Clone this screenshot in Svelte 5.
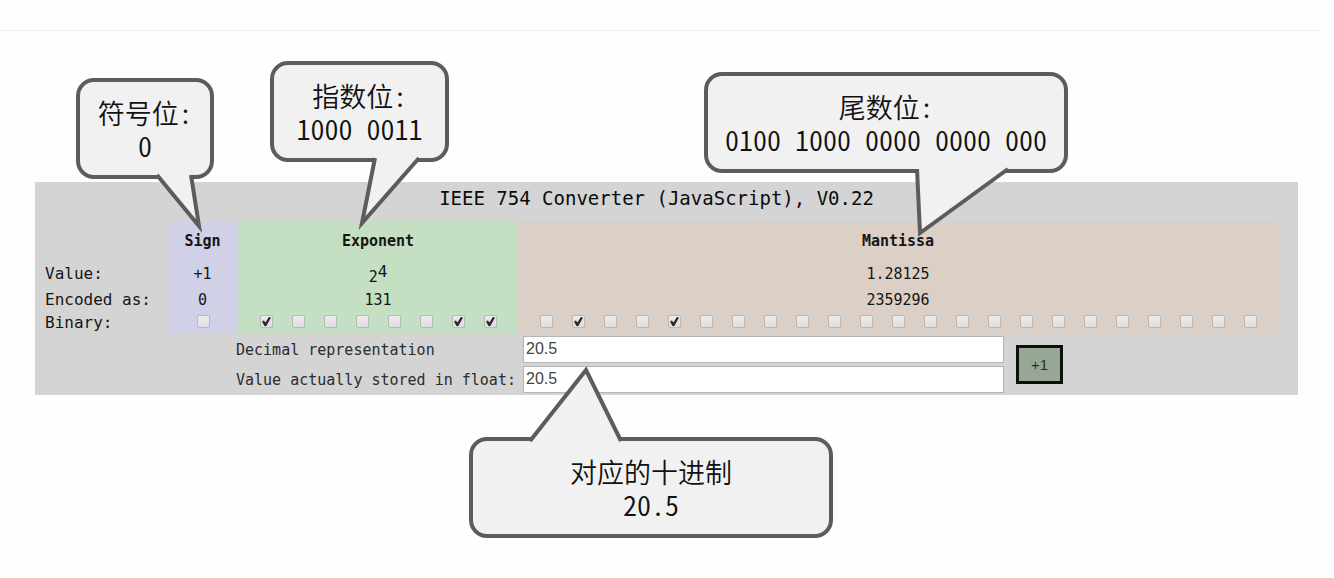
<script>
  let sign = $state([false]);
  let exponent = $state([true, false, false, false, false, false, true, true]);
  let mantissa = $state(Array.from({ length: 23 }, (_, i) => i === 1 || i === 4));
  let decimal = $state('20.5');
  let stored = $state('20.5');
</script>

{#snippet bits(list, name)}
  <div class="bits">
    {#each list as _, i}
      <input type="checkbox" aria-label={`${name} ${i + 1}`} bind:checked={list[i]} />
    {/each}
  </div>
{/snippet}

<hr />
<main>
  <section class="panel">
    <h1>IEEE 754 Converter (JavaScript), V0.22</h1>
    <table>
      <colgroup>
        <col class="c-label" /><col class="c-sign" /><col class="c-exp" /><col />
      </colgroup>
      <thead>
        <tr class="head">
          <td></td>
          <th scope="col" class="sign">Sign</th>
          <th scope="col" class="exp">Exponent</th>
          <th scope="col" class="man">Mantissa</th>
        </tr>
      </thead>
      <tbody>
        <tr class="value">
          <th scope="row">Value:</th>
          <td class="sign">+1</td>
          <td class="exp power">2<sup>4</sup></td>
          <td class="man">1.28125</td>
        </tr>
        <tr class="encoded">
          <th scope="row">Encoded as:</th>
          <td class="sign">0</td>
          <td class="exp">131</td>
          <td class="man">2359296</td>
        </tr>
        <tr class="binary">
          <th scope="row">Binary:</th>
          <td class="sign">{@render bits(sign, 'Sign')}</td>
          <td class="exp">{@render bits(exponent, 'Exponent')}</td>
          <td class="man">{@render bits(mantissa, 'Mantissa')}</td>
        </tr>
      </tbody>
    </table>
    <form onsubmit={(e) => e.preventDefault()}>
      <div class="fields">
        <label for="decimal">Decimal representation</label>
        <input id="decimal" type="text" bind:value={decimal} />
        <label for="stored">Value actually stored in float:</label>
        <input id="stored" type="text" bind:value={stored} />
      </div>
      <button type="button">+1</button>
    </form>
  </section>

  <aside class="callout on-sign">
    <svg width="60" height="60" viewBox="0 0 60 60" aria-hidden="true">
      <path d="M1 1 L43 52 L35 1" />
    </svg>
    <p class="zh">符号位:</p>
    <p class="num">0</p>
  </aside>
  <aside class="callout on-exp">
    <svg width="80" height="80" viewBox="0 0 80 80" aria-hidden="true">
      <path d="M17 2 L4 67 L61 2" />
    </svg>
    <p class="zh">指数位:</p>
    <p class="num">1000 0011</p>
  </aside>
  <aside class="callout on-man">
    <svg width="110" height="80" viewBox="0 0 110 80" aria-hidden="true">
      <path d="M3 1 L6 65 L94 1" />
    </svg>
    <p class="zh">尾数位:</p>
    <p class="num">0100 1000 0000 0000 000</p>
  </aside>
  <aside class="callout on-dec">
    <svg width="110" height="80" viewBox="0 0 110 80" aria-hidden="true">
      <path d="M5 79 L61 8 L96 79" />
    </svg>
    <p class="zh">对应的十进制</p>
    <p class="num">20.5</p>
  </aside>
</main>

<style>
  :global(body) {
    margin: 0;
    background: #fefefe;
  }

  hr {
    margin: 30px 14px 0 0;
    border: 0;
    border-top: 1px solid #eeeeee;
  }

  main {
    position: relative;
    padding: 151px 36px 183px 35px;
    color: #151515;
    font: 15px/20px 'DejaVu Sans Mono', monospace;
  }

  .panel {
    background: #d4d4d4;
  }

  h1 {
    margin: 0;
    padding: 0 20px 7px 0;
    font-size: 19px;
    font-weight: 400;
    line-height: 32px;
    text-align: center;
    color: #0c0c0c;
  }

  table {
    width: calc(100% - 20px);
    table-layout: fixed;
    border-collapse: collapse;
  }

  .c-label { width: 132px; }
  .c-sign { width: 71px; }
  .c-exp { width: 280px; }

  th,
  td {
    padding: 0;
    text-align: center;
    font-weight: 400;
  }

  th { font-size: 16px; }

  tbody th {
    padding-left: 10px;
    text-align: left;
    white-space: nowrap;
  }

  .sign { background: #d0d0e6; }
  .exp { background: #c5dfc2; }
  .man { background: #dcd0c6; }

  .head { height: 40px; }
  .head th {
    font-size: 15px;
    font-weight: 700;
  }
  .value { height: 26px; }
  .value .power { padding-top: 6px; }
  .encoded { height: 25px; }
  .binary { height: 22px; }
  .binary td { vertical-align: top; }

  sup {
    font-size: 16px;
    line-height: 0;
    vertical-align: 5px;
  }

  .bits {
    display: flex;
    justify-content: center;
    padding-top: 3px;
  }

  .bits input {
    appearance: none;
    position: relative;
    box-sizing: border-box;
    width: 13px;
    height: 13px;
    margin: 0 9px 0 10px;
    border: 1px solid #b9b9b9;
    border-radius: 2px;
    background: linear-gradient(#ececec, #dedede);
  }

  .bits input:checked::after {
    content: '';
    position: absolute;
    inset: 1px;
    background: #2c2c2c;
    clip-path: polygon(0 48%, 22% 38%, 38% 60%, 76% 0, 100% 8%, 48% 100%, 26% 100%);
  }

  form {
    display: flex;
    align-items: center;
    gap: 12px;
    padding: 2px 0 2px 201px;
  }

  .fields {
    display: grid;
    grid-template-columns: 287px 481px;
    row-gap: 3px;
    align-items: center;
    color: #2c2c2c;
  }

  .fields input {
    box-sizing: border-box;
    width: 100%;
    height: 27px;
    padding: 0 2px 2px;
    border: 1px solid #b4b4b4;
    background: #fff;
    color: #444;
    font: 16px 'Liberation Sans', Arial, sans-serif;
  }

  button {
    width: 47px;
    height: 39px;
    padding: 0;
    border: 3px solid #0c0f0c;
    background: #98a695;
    color: #263328;
    font: 15px 'Liberation Sans', Arial, sans-serif;
  }

  .callout {
    position: absolute;
    box-sizing: border-box;
    height: 101px;
    padding: 14px 0 0;
    border: 4px solid #5c5c5c;
    border-radius: 18px;
    background: #f1f1f1;
    color: #111;
    text-align: center;
    white-space: nowrap;
  }

  .callout p {
    margin: 0;
    font-family: 'Noto Sans CJK SC', sans-serif;
    font-feature-settings: 'hwid';
    font-weight: 350;
    line-height: 33px;
  }

  .callout .zh { font-size: 27px; }
  .callout .num { font-size: 28px; }

  .callout svg {
    position: absolute;
    overflow: visible;
    fill: #f1f1f1;
    stroke: #5c5c5c;
    stroke-width: 4;
    stroke-miterlimit: 12;
  }

  .on-sign { left: 76px; top: 47px; width: 138px; }
  .on-sign svg { left: 76px; top: 92px; }
  .on-exp { left: 270px; top: 30px; width: 179px; }
  .on-exp svg { left: 84px; top: 91px; }
  .on-man { left: 704px; top: 41px; width: 364px; }
  .on-man svg { left: 206px; top: 92px; }
  .on-dec { left: 469px; top: 406px; width: 364px; }
  .on-dec svg { left: 52px; top: -79px; }
</style>
